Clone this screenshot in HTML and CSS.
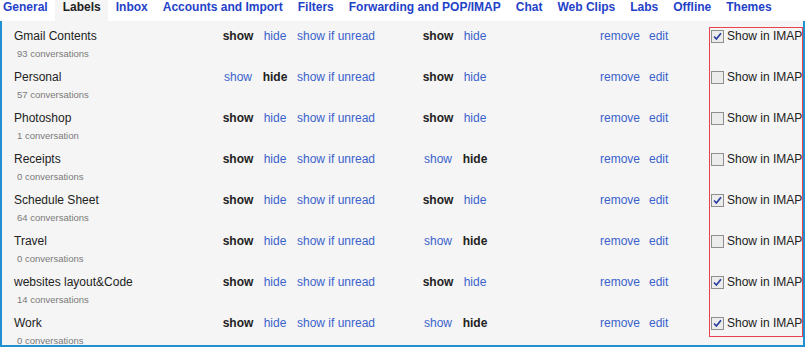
FILE: index.html
```html
<!DOCTYPE html>
<html lang="en">
<head>
    <meta charset="UTF-8">
    <meta name="viewport" content="width=device-width, initial-scale=1.0">
    <title>Settings - Labels</title>
    <link rel="stylesheet" href="styles.css">
</head>
<body>
    <div class="tabs">
        <a class="tab first">General</a>
        <span class="tab active">Labels</span>
        <a class="tab">Inbox</a>
        <a class="tab">Accounts and Import</a>
        <a class="tab">Filters</a>
        <a class="tab">Forwarding and POP/IMAP</a>
        <a class="tab">Chat</a>
        <a class="tab">Web Clips</a>
        <a class="tab">Labs</a>
        <a class="tab">Offline</a>
        <a class="tab">Themes</a>
    </div>

    <div class="panel">
        <div class="label-row">
            <div class="name">Gmail Contents<div class="count">93 conversations</div></div>
            <span class="cell on">show</span><a class="cell">hide</a><a class="cell unread">show if unread</a>
            <span class="cell on">show</span><a class="cell">hide</a>
            <span></span>
            <div class="actions"><a>remove</a><a>edit</a></div>
            <label class="imap"><svg class="box" viewBox="0 0 13 13"><rect x="0.5" y="0.5" width="12" height="12"/><path d="M3 6.5 5.4 9 10 3.2"/></svg>Show in IMAP</label>
        </div>
        <div class="label-row">
            <div class="name">Personal<div class="count">57 conversations</div></div>
            <a class="cell">show</a><span class="cell on">hide</span><a class="cell unread">show if unread</a>
            <span class="cell on">show</span><a class="cell">hide</a>
            <span></span>
            <div class="actions"><a>remove</a><a>edit</a></div>
            <label class="imap"><svg class="box" viewBox="0 0 13 13"><rect x="0.5" y="0.5" width="12" height="12"/></svg>Show in IMAP</label>
        </div>
        <div class="label-row">
            <div class="name">Photoshop<div class="count">1 conversation</div></div>
            <span class="cell on">show</span><a class="cell">hide</a><a class="cell unread">show if unread</a>
            <span class="cell on">show</span><a class="cell">hide</a>
            <span></span>
            <div class="actions"><a>remove</a><a>edit</a></div>
            <label class="imap"><svg class="box" viewBox="0 0 13 13"><rect x="0.5" y="0.5" width="12" height="12"/></svg>Show in IMAP</label>
        </div>
        <div class="label-row">
            <div class="name">Receipts<div class="count">0 conversations</div></div>
            <span class="cell on">show</span><a class="cell">hide</a><a class="cell unread">show if unread</a>
            <a class="cell">show</a><span class="cell on">hide</span>
            <span></span>
            <div class="actions"><a>remove</a><a>edit</a></div>
            <label class="imap"><svg class="box" viewBox="0 0 13 13"><rect x="0.5" y="0.5" width="12" height="12"/></svg>Show in IMAP</label>
        </div>
        <div class="label-row">
            <div class="name">Schedule Sheet<div class="count">64 conversations</div></div>
            <span class="cell on">show</span><a class="cell">hide</a><a class="cell unread">show if unread</a>
            <span class="cell on">show</span><a class="cell">hide</a>
            <span></span>
            <div class="actions"><a>remove</a><a>edit</a></div>
            <label class="imap"><svg class="box" viewBox="0 0 13 13"><rect x="0.5" y="0.5" width="12" height="12"/><path d="M3 6.5 5.4 9 10 3.2"/></svg>Show in IMAP</label>
        </div>
        <div class="label-row">
            <div class="name">Travel<div class="count">0 conversations</div></div>
            <span class="cell on">show</span><a class="cell">hide</a><a class="cell unread">show if unread</a>
            <a class="cell">show</a><span class="cell on">hide</span>
            <span></span>
            <div class="actions"><a>remove</a><a>edit</a></div>
            <label class="imap"><svg class="box" viewBox="0 0 13 13"><rect x="0.5" y="0.5" width="12" height="12"/></svg>Show in IMAP</label>
        </div>
        <div class="label-row">
            <div class="name">websites layout&amp;Code<div class="count">14 conversations</div></div>
            <span class="cell on">show</span><a class="cell">hide</a><a class="cell unread">show if unread</a>
            <span class="cell on">show</span><a class="cell">hide</a>
            <span></span>
            <div class="actions"><a>remove</a><a>edit</a></div>
            <label class="imap"><svg class="box" viewBox="0 0 13 13"><rect x="0.5" y="0.5" width="12" height="12"/><path d="M3 6.5 5.4 9 10 3.2"/></svg>Show in IMAP</label>
        </div>
        <div class="label-row">
            <div class="name">Work<div class="count">0 conversations</div></div>
            <span class="cell on">show</span><a class="cell">hide</a><a class="cell unread">show if unread</a>
            <a class="cell">show</a><span class="cell on">hide</span>
            <span></span>
            <div class="actions"><a>remove</a><a>edit</a></div>
            <label class="imap"><svg class="box" viewBox="0 0 13 13"><rect x="0.5" y="0.5" width="12" height="12"/><path d="M3 6.5 5.4 9 10 3.2"/></svg>Show in IMAP</label>
        </div>

        <!-- highlight round the IMAP column -->
        <div class="imap-highlight"></div>
    </div>
</body>
</html>
```

FILE: styles.css
```css
body {
    margin: 0;
    font-family: "Liberation Sans", Arial, sans-serif;
    font-size: 12px;
    color: #222;
    background: white;
}

.tabs {
    display: flex;
    height: 21px;
}

.tab {
    padding: 0 7.5px 6px;
    line-height: 15px;
    font-weight: bold;
    color: #1f42c8;
    white-space: nowrap;
}

.tab.first {
    padding-left: 3px;
}

.tab.active {
    color: #222;
    background: #f5f5f5;
}

.panel {
    position: relative;
    box-sizing: border-box;
    width: 805px;
    height: 326px;
    background: #f5f5f5;
    border: 2px solid #2190d0;
    border-top: none;
}

.label-row {
    display: grid;
    grid-template-columns: 206px 36px 38px 126px 36px 38px 106px 109px 1fr;
    align-items: start;
    box-sizing: border-box;
    height: 41px;
    padding: 8px 0 0 12px;
    line-height: 14px;
}

.label-row:last-of-type {
    height: 37px;
}

.name {
    color: #222;
}

.count {
    margin-top: 5px;
    padding-left: 3px;
    font-size: 9.5px;
    line-height: 11px;
    color: #7a7a7a;
}

.cell {
    text-align: center;
    white-space: nowrap;
}

a, .cell {
    color: #3a62cc;
}

.cell.on {
    color: #222;
    font-weight: bold;
}

.cell.unread {
    text-align: left;
    padding-left: 3px;
}

.actions {
    display: flex;
    gap: 9px;
}

.imap {
    display: flex;
    align-items: center;
    gap: 3px;
    padding-left: 2px;
    white-space: nowrap;
    color: #222;
}

.box {
    width: 13px;
    height: 13px;
    flex: none;
}

.box rect {
    fill: #ececec;
    stroke: #8f8f8f;
    stroke-width: 1;
}

.box path {
    fill: none;
    stroke: #2a3f9e;
    stroke-width: 1.7;
}

.imap-highlight {
    position: absolute;
    left: 707px;
    top: 6px;
    width: 92px;
    height: 308px;
    border: 1px solid #e8424e;
    pointer-events: none;
}
```
